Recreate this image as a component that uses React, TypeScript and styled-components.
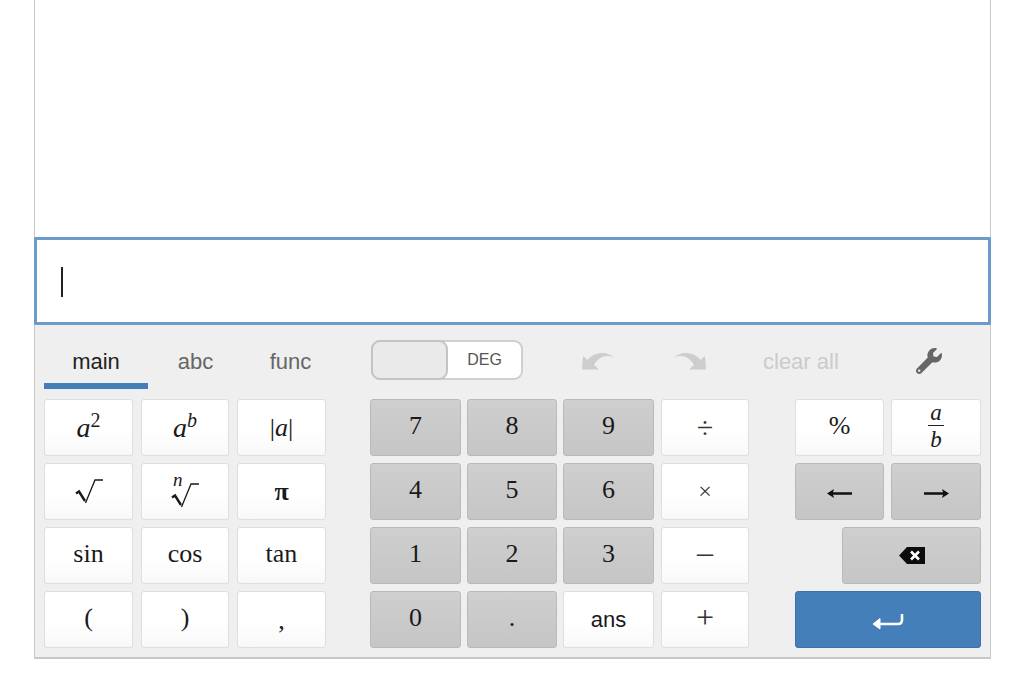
import React from "react";
import styled, { createGlobalStyle, css } from "styled-components";
import { FaWrench } from "react-icons/fa";

const GlobalStyle = createGlobalStyle`
  html, body {
    margin: 0;
    padding: 0;
    background: #fff;
    font-family: "Liberation Sans", Arial, sans-serif;
  }
`;

const Frame = styled.div`
  width: 957px;
  margin-left: 34px;
`;

const Display = styled.div`
  height: 237px;
  box-sizing: border-box;
  background: #fff;
  border-left: 1px solid #c8c8c8;
  border-right: 1px solid #c8c8c8;
`;

const InputBox = styled.div`
  height: 88px;
  box-sizing: border-box;
  display: flex;
  align-items: center;
  padding: 0 0 0 24px;
  background: #fff;
  border: 3px solid #6a9bc9;
  border-radius: 1px;
`;

const Caret = styled.div`
  width: 2px;
  height: 30px;
  margin-top: 1px;
  background: #222;
`;

const Panel = styled.div`
  height: 334px;
  box-sizing: border-box;
  padding: 0 9px 0 9px;
  background: #efefef;
  border-left: 1px solid #c8c8c8;
  border-right: 1px solid #c8c8c8;
  border-bottom: 2px solid #c8c8c8;
`;

const Toolbar = styled.div`
  height: 74px;
  box-sizing: border-box;
  padding-top: 15px;
  display: flex;
  align-items: flex-start;
`;

const Tabs = styled.div`
  display: flex;
`;

const Tab = styled.div<{ $active?: boolean; $wide?: boolean }>`
  width: ${(p) => (p.$wide ? 104 : 95)}px;
  height: 49px;
  box-sizing: border-box;
  display: flex;
  align-items: center;
  justify-content: center;
  font-size: 22px;
  color: ${(p) => (p.$active ? "#222" : "#666")};
  border-bottom: 6px solid ${(p) => (p.$active ? "#447fb9" : "transparent")};
`;

const Toggle = styled.div`
  width: 152px;
  height: 40px;
  margin-left: 33px;
  box-sizing: border-box;
  display: flex;
  background: #fff;
  border: 2px solid #cfcfcf;
  border-radius: 9px;
`;

const ToggleThumb = styled.div`
  width: 73px;
  margin: -2px 0 -2px -2px;
  background: #eaeaea;
  border: 2px solid #c4c4c4;
  border-radius: 9px;
`;

const ToggleLabel = styled.div`
  flex: 1;
  display: flex;
  align-items: center;
  justify-content: center;
  font-size: 16px;
  color: #555;
`;

const Actions = styled.div`
  height: 40px;
  margin-left: 30px;
  display: flex;
  align-items: center;
`;

const HistoryButton = styled.div`
  width: 91px;
  display: flex;
  justify-content: center;
`;

const HistoryIcon = styled.svg<{ $flip?: boolean }>`
  width: 33px;
  height: 19px;
  fill: #cdcdcd;
  ${(p) =>
    p.$flip &&
    css`
      transform: scaleX(-1);
    `}
`;

const ClearAll = styled.div`
  margin-left: 28px;
  font-size: 22px;
  line-height: 40px;
  padding-top: 4px;
  color: #cbcbcb;
`;

const Settings = styled.div`
  margin-left: 77px;
  display: flex;
  margin-top: 1px;
  color: #666;
  font-size: 26px;
`;

const Keypad = styled.div`
  display: flex;
`;

const KeyGrid = styled.div<{ $cols: string }>`
  display: grid;
  grid-template-columns: ${(p) => p.$cols};
  grid-auto-rows: 57px;
  column-gap: 8px;
  row-gap: 7px;
`;

const MathKeys = styled(KeyGrid)`
  margin-right: 44px;
`;

const Digits = styled(KeyGrid)`
  column-gap: 6px;
  margin-right: 7px;
`;

const Operators = styled(KeyGrid)`
  margin-right: 46px;
`;

const EditKeys = styled(KeyGrid)`
  column-gap: 7px;
`;

type Tone = "white" | "gray" | "blue";

const toneStyles = {
  white: css`
    background: linear-gradient(#fff 55%, #f8f8f8);
    border: 1px solid #dedede;
    color: #1a1a1a;
  `,
  gray: css`
    background: linear-gradient(#cfcfcf, #c5c5c5);
    border: 1px solid #bababa;
    color: #1a1a1a;
  `,
  blue: css`
    background: #447fb9;
    border: 1px solid #3c72a8;
    color: #fff;
  `,
};

const Key = styled.div<{ $tone?: Tone; $sans?: boolean }>`
  box-sizing: border-box;
  display: flex;
  align-items: center;
  justify-content: center;
  border-radius: 3px;
  font-family: ${(p) =>
    p.$sans
      ? '"Liberation Sans", Arial, sans-serif'
      : '"Liberation Serif", "Times New Roman", serif'};
  font-size: ${(p) => (p.$sans ? 22 : 26)}px;
  ${(p) => toneStyles[p.$tone || "white"]}
`;

// digits and words sit a little above the middle of the key
const TextKey = styled(Key)`
  padding-bottom: 4px;
`;

const MinusKey = styled(Key)`
  padding-bottom: 6px;
`;

const BackspaceKey = styled(Key)`
  grid-column: 1 / span 2;
  justify-self: end;
  width: 139px;
`;

const EnterKey = styled(Key)`
  grid-column: 1 / span 2;
`;

const Var = styled.span`
  font-style: italic;
`;

const PowerBase = styled(Var)`
  font-size: 28px;
`;

const Sup = styled.sup`
  font-size: 20px;
  line-height: 0;
  vertical-align: 10px;
`;

const Fraction = styled.div`
  display: flex;
  flex-direction: column;
  align-items: center;
  font-style: italic;
  font-size: 23px;
  line-height: 28px;
`;

const FractionTop = styled.span`
  width: 16px;
  text-align: center;
  border-bottom: 1px solid #222;
  line-height: 24px;
`;

const NthRoot = styled.div`
  position: relative;
  display: flex;
  padding-top: 8px;
`;

const RootIndex = styled.span`
  position: absolute;
  left: 2px;
  top: -5px;
  font-style: italic;
  font-size: 19px;
  line-height: 20px;
`;

const Operator = styled.span<{ $size: number }>`
  font-size: ${(p) => p.$size}px;
  color: #333;
`;

const PiGlyph = styled.span`
  font-weight: bold;
`;

const Comma = styled.span`
  padding-top: 2px;
`;

const UndoPath = () => (
  <path d="M1 5 L5.5 9 C12 1 24 -1 33 7 C25 3 17 5 12 14 L17 18.5 L0 18.5 Z" />
);

const Radical = () => (
  <svg width="28" height="25" viewBox="0 0 28 25" fill="none" stroke="#1a1a1a">
    <path d="M1 14.5 L4 12.5 L10 22" strokeWidth="2.4" />
    <path d="M10.5 24 L20 1 L28 1" strokeWidth="1.3" />
  </svg>
);

const ArrowIcon = ({ flip }: { flip?: boolean }) => (
  <svg
    width="25"
    height="11"
    viewBox="0 0 25 11"
    fill="#111"
    style={{ marginTop: 3, transform: flip ? "scaleX(-1)" : undefined }}
  >
    <path d="M0 5.5 L7 1 L6 4.2 H25 V6.8 H6 L7 10 Z" />
  </svg>
);

const App = () => {
  return (
    <>
      <GlobalStyle />
      <Frame>
        <Display />
        <InputBox>
          <Caret />
        </InputBox>
        <Panel>
          <Toolbar>
            <Tabs>
              <Tab $active $wide>
                main
              </Tab>
              <Tab>abc</Tab>
              <Tab>func</Tab>
            </Tabs>
            <Toggle>
              <ToggleThumb />
              <ToggleLabel>DEG</ToggleLabel>
            </Toggle>
            <Actions>
              <HistoryButton>
                <HistoryIcon viewBox="0 0 33 19">
                  <UndoPath />
                </HistoryIcon>
              </HistoryButton>
              <HistoryButton>
                <HistoryIcon viewBox="0 0 33 19" $flip>
                  <UndoPath />
                </HistoryIcon>
              </HistoryButton>
              <ClearAll>clear all</ClearAll>
              <Settings>
                <FaWrench />
              </Settings>
            </Actions>
          </Toolbar>
          <Keypad>
            <MathKeys $cols="89px 88px 89px">
              <Key>
                <span>
                  <PowerBase>a</PowerBase>
                  <Sup>2</Sup>
                </span>
              </Key>
              <Key>
                <span>
                  <PowerBase>a</PowerBase>
                  <Sup>
                    <Var>b</Var>
                  </Sup>
                </span>
              </Key>
              <Key>
                <span>
                  |<Var>a</Var>|
                </span>
              </Key>
              <Key>
                <Radical />
              </Key>
              <Key>
                <NthRoot>
                  <RootIndex>n</RootIndex>
                  <Radical />
                </NthRoot>
              </Key>
              <Key>
                <PiGlyph>π</PiGlyph>
              </Key>
              <TextKey>sin</TextKey>
              <TextKey>cos</TextKey>
              <TextKey>tan</TextKey>
              <TextKey>(</TextKey>
              <TextKey>)</TextKey>
              <Key>
                <Comma>,</Comma>
              </Key>
            </MathKeys>
            <Digits $cols="91px 90px 91px">
              <TextKey $tone="gray">7</TextKey>
              <TextKey $tone="gray">8</TextKey>
              <TextKey $tone="gray">9</TextKey>
              <TextKey $tone="gray">4</TextKey>
              <TextKey $tone="gray">5</TextKey>
              <TextKey $tone="gray">6</TextKey>
              <TextKey $tone="gray">1</TextKey>
              <TextKey $tone="gray">2</TextKey>
              <TextKey $tone="gray">3</TextKey>
              <TextKey $tone="gray">0</TextKey>
              <TextKey $tone="gray">.</TextKey>
              <Key $sans>ans</Key>
            </Digits>
            <Operators $cols="88px">
              <Key>
                <Operator $size={30}>÷</Operator>
              </Key>
              <Key>
                <Operator $size={24}>×</Operator>
              </Key>
              <MinusKey>
                <Operator $size={32}>–</Operator>
              </MinusKey>
              <TextKey>
                <Operator $size={32}>+</Operator>
              </TextKey>
            </Operators>
            <EditKeys $cols="89px 90px">
              <TextKey>%</TextKey>
              <Key>
                <Fraction>
                  <FractionTop>a</FractionTop>
                  <span>b</span>
                </Fraction>
              </Key>
              <Key $tone="gray">
                <ArrowIcon />
              </Key>
              <Key $tone="gray">
                <ArrowIcon flip />
              </Key>
              <BackspaceKey $tone="gray">
                <svg width="26" height="17" viewBox="0 0 26 17">
                  <path d="M8 0 H26 V17 H8 L0 8.5 Z" fill="#0c0c0c" />
                  <path
                    d="M12 4.5 L20 12.5 M20 4.5 L12 12.5"
                    stroke="#fff"
                    strokeWidth="2.6"
                  />
                </svg>
              </BackspaceKey>
              <EnterKey $tone="blue">
                <svg
                  width="32"
                  height="17"
                  viewBox="0 0 32 17"
                  fill="none"
                  stroke="#fff"
                  style={{ marginTop: 3 }}
                >
                  <path d="M30 1 V7 Q30 11 26 11 H5" strokeWidth="2.6" />
                  <path d="M8 5.5 L1 11 L8 16 Z" fill="#fff" strokeWidth="1" />
                </svg>
              </EnterKey>
            </EditKeys>
          </Keypad>
        </Panel>
      </Frame>
    </>
  );
};

export default App;
